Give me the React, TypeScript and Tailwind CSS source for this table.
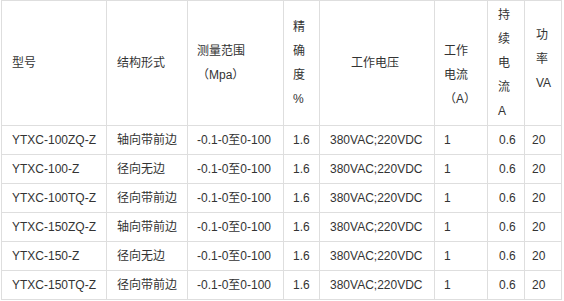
const rows = [
  ["YTXC-100ZQ-Z", "轴向带前边"],
  ["YTXC-100-Z", "径向无边"],
  ["YTXC-100TQ-Z", "径向带前边"],
  ["YTXC-150ZQ-Z", "轴向带前边"],
  ["YTXC-150-Z", "径向无边"],
  ["YTXC-150TQ-Z", "径向带前边"],
];

const cell = "border-r border-b border-[#dedede] align-middle py-[2px]";

export default function App() {
  return (
    <div
      className="bg-white w-[564px] h-[301px] text-[12px] leading-[24px] text-[#333]"
      style={{ fontFamily: '"Liberation Sans", Arial, "Noto Sans CJK SC", sans-serif' }}
    >
      <table className="ml-px w-[561px] table-fixed border-separate border-spacing-0 border-l border-t border-[#dedede]">
        <colgroup>
          <col className="w-[105px]" />
          <col className="w-[81px]" />
          <col className="w-[96px]" />
          <col className="w-[36px]" />
          <col className="w-[115px]" />
          <col className="w-[53px]" />
          <col className="w-[37px]" />
          <col className="w-[37px]" />
        </colgroup>
        <thead>
          <tr className="text-left font-normal">
            <th className={`${cell} font-normal pl-[10px]`}>型号</th>
            <th className={`${cell} font-normal pl-[10px]`}>结构形式</th>
            <th className={`${cell} font-normal pl-[9px]`}>
              测量范围
              <br />
              （Mpa）
            </th>
            <th className={`${cell} font-normal pl-[9px]`}>
              精<br />确<br />度<br />%
            </th>
            <th className={`${cell} font-normal pl-[31px]`}>工作电压</th>
            <th className={`${cell} font-normal pl-[9px] pt-[26px]`}>
              工作
              <br />
              电流
              <br />
              （A）
            </th>
            <th className={`${cell} font-normal pl-[10px]`}>
              持<br />续<br />电<br />流<br />A
            </th>
            <th className={`${cell} font-normal pl-[11px] pb-[11px]`}>
              功<br />率<br />VA
            </th>
          </tr>
        </thead>
        <tbody>
          {rows.map(([model, form]) => (
            <tr key={model}>
              <td className={`${cell} pl-[10px] whitespace-nowrap`}>{model}</td>
              <td className={`${cell} pl-[10px] whitespace-nowrap`}>{form}</td>
              <td className={`${cell} pl-[9px] whitespace-nowrap`}>-0.1-0至0-100</td>
              <td className={`${cell} pl-[9px]`}>1.6</td>
              <td className={`${cell} pl-[10px] whitespace-nowrap`}>380VAC;220VDC</td>
              <td className={`${cell} pl-[9px]`}>1</td>
              <td className={`${cell} pl-[11px]`}>0.6</td>
              <td className={`${cell} pl-[7px]`}>20</td>
            </tr>
          ))}
        </tbody>
      </table>
    </div>
  );
}
